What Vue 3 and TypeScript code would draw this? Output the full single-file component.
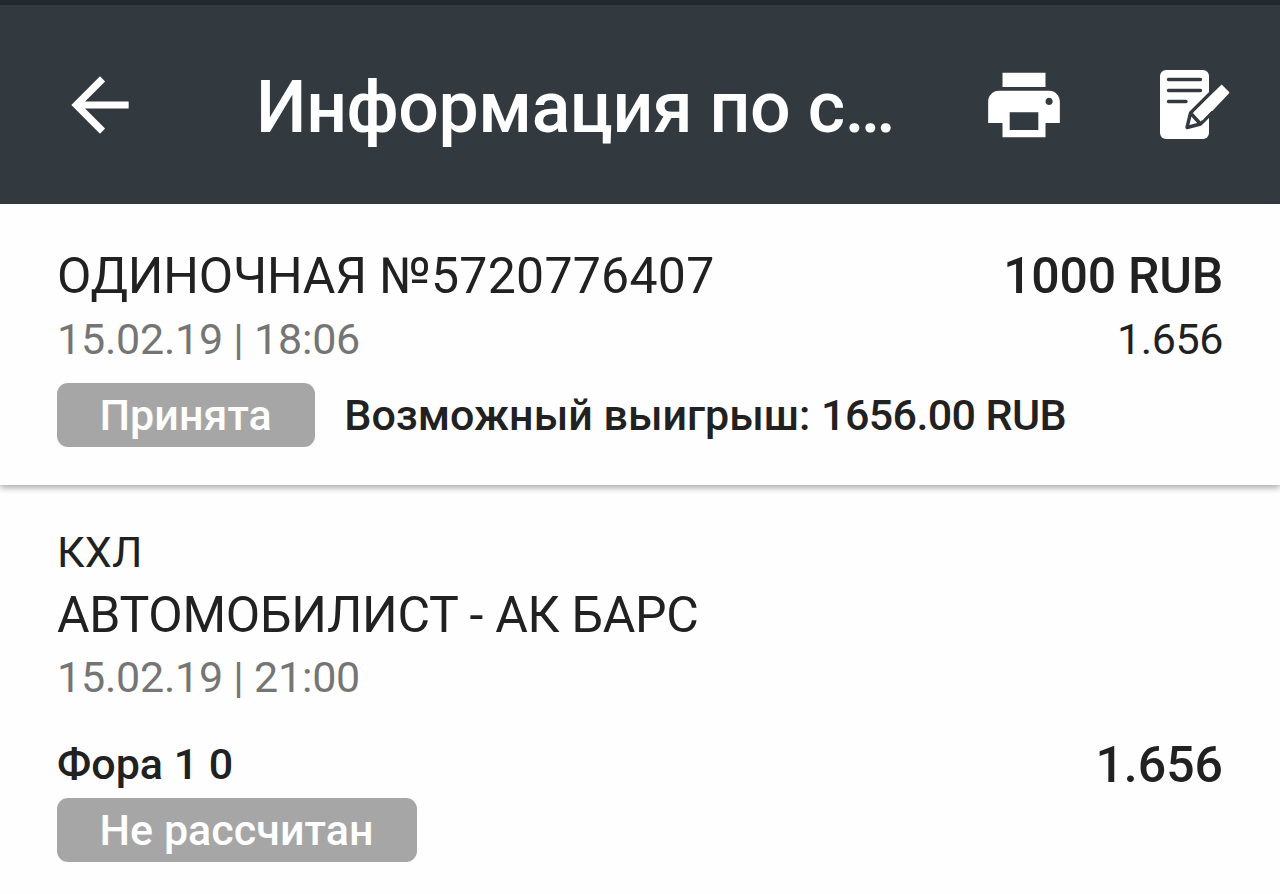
<template>
  <div class="page">
    <div class="statusBar"></div>
    <header class="toolbar">
      <svg class="icon" viewBox="0 0 24 24">
        <path d="M20 11H7.83l5.59-5.59L12 4l-8 8 8 8 1.41-1.41L7.83 13H20v-2z" />
      </svg>
      <h1 class="title">{{ title }}</h1>
      <svg class="icon" viewBox="0 0 24 24">
        <path d="M19 8H5c-1.66 0-3 1.34-3 3v6h4v4h12v-4h4v-6c0-1.66-1.34-3-3-3zm-3 11H8v-5h8v5zm3-7c-.55 0-1-.45-1-1s.45-1 1-1 1 .45 1 1-.45 1-1 1zm-1-9H6v4h12V3z" />
      </svg>
      <svg class="iconEdit" viewBox="0 0 72 72">
        <rect x="0" y="0" width="49" height="69" rx="6" />
        <path class="line" d="M8.5 9.5H40.5M8.5 20.5H40.5M8.5 31.5H26" />
        <path d="M61.5 15L69.5 22.8L40.5 53.5L27 57.5L30.5 43.5Z" />
        <path class="line" d="M59.5 14L30.5 43L27 57.5L40.5 54L52 42.5M30.5 43L40.5 54" />
        <path d="M61.7 14.5L69.2 22.3L42.3 50.5L33.5 42.6Z" />
      </svg>
    </header>

    <section class="coupon">
      <div class="row">
        <span class="textBig">
          <span class="couponType">{{ coupon.type }}</span> <span class="couponNumber">{{ coupon.number }}</span>
        </span>
        <span class="textBig bold sum">{{ coupon.sum }}</span>
      </div>
      <div class="row rowDate">
        <span class="date">{{ coupon.date }}</span>
        <span class="coef">{{ coupon.coef }}</span>
      </div>
      <div class="state">
        <span class="badge">{{ coupon.status }}</span>
        <span class="bold">Возможный выигрыш: <span class="win">{{ coupon.win }}</span></span>
      </div>
    </section>

    <section v-for="item in events" :key="item.teams" class="event">
      <div>{{ item.league }}</div>
      <div class="textBig teams">{{ item.teams }}</div>
      <div class="date">{{ item.date }}</div>
      <div class="row rowBet">
        <span class="bold bet">{{ item.bet }}</span>
        <span class="textBig bold">{{ item.coef }}</span>
      </div>
      <span class="badge">{{ item.status }}</span>
    </section>
  </div>
</template>

<script lang="ts" setup>
import { ref } from "vue";

interface BetEvent {
  league: string;
  teams: string;
  date: string;
  bet: string;
  coef: string;
  status: string;
}

const title = ref("Информация по с…");

const coupon = ref({
  type: "ОДИНОЧНАЯ",
  number: "№5720776407",
  sum: "1000 RUB",
  date: "15.02.19 | 18:06",
  coef: "1.656",
  status: "Принята",
  win: "1656.00 RUB",
});

const events = ref<BetEvent[]>([
  {
    league: "КХЛ",
    teams: "АВТОМОБИЛИСТ - АК БАРС",
    date: "15.02.19 | 21:00",
    bet: "Фора 1 0",
    coef: "1.656",
    status: "Не рассчитан",
  },
]);
</script>

<style>
body {
  margin: 0;
  background: #fefefe;
}
</style>

<style scoped>
.page {
  height: 894px;
  overflow: hidden;
  background: #fefefe;
  color: #212121;
  font-family: Roboto, "Noto Sans", sans-serif;
  font-size: 43px;
  line-height: 50px;
  white-space: nowrap;
}

.statusBar {
  height: 5px;
  background: #232831;
}

.toolbar {
  display: flex;
  align-items: flex-start;
  box-sizing: border-box;
  height: 199px;
  padding: 57px 48px 0 57px;
  background: #32393f;
  color: #fff;
}

.toolbar svg {
  flex: none;
  fill: #fff;
}

.icon {
  width: 86px;
  height: 86px;
}

.title {
  flex: 1;
  margin: 4px 0 0 113px;
  font-size: 71.6px;
  font-weight: 500;
  letter-spacing: -0.42px;
  line-height: 84px;
}

.iconEdit {
  width: 72px;
  height: 72px;
  margin: 8px 0 0 93px;
}

.iconEdit .line {
  fill: none;
  stroke: #32393f;
  stroke-width: 3.4;
  stroke-linecap: round;
  stroke-linejoin: round;
}

.coupon {
  position: relative;
  box-sizing: border-box;
  height: 281px;
  padding: 42px 57px 0;
  background: #fefefe;
  box-shadow: 0 3px 6px rgba(0, 0, 0, 0.32);
}

.row {
  display: flex;
  justify-content: space-between;
  align-items: baseline;
}

.textBig {
  font-size: 50px;
  line-height: 60px;
}

.bold {
  font-weight: 500;
}

.couponType {
  letter-spacing: -0.2px;
}

.couponNumber {
  letter-spacing: 0.25px;
}

.sum {
  letter-spacing: -0.25px;
}

.rowDate {
  margin-top: 8px;
}

.date {
  color: #757575;
  letter-spacing: -0.22px;
}

.coef {
  letter-spacing: -0.4px;
}

.state {
  display: flex;
  align-items: center;
  gap: 29px;
  margin-top: 19px;
}

.win {
  letter-spacing: -0.6px;
}

.badge {
  display: inline-block;
  padding: 0 43.5px 0 42.5px;
  border-radius: 11px;
  background: #a6a6a6;
  color: #fff;
  font-weight: 500;
  letter-spacing: 0.05px;
  line-height: 64px;
}

.event {
  padding: 42px 57px 0;
}

.teams {
  margin: 8px 0 7px;
  letter-spacing: -0.3px;
}

.rowBet {
  align-items: flex-start;
  height: 60px;
  margin: 33px 0 3px;
}

.bet {
  line-height: 58px;
}
</style>
